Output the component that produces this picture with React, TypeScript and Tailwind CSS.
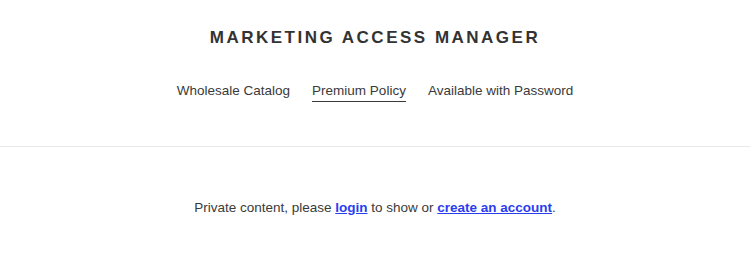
import React from "react";

const App = () => {
  return (
    <div className="min-h-screen bg-white font-['Liberation_Sans',Arial,sans-serif] text-[#3a3a3a]">
      <header className="flex flex-col items-center border-b border-[#e8e8e8] pt-[27px] pb-[44px]">
        <h1 className="text-[17px] font-bold tracking-[2.5px] uppercase leading-[22px] text-[#333]">
          Marketing Access Manager
        </h1>
        <nav className="mt-[32px] flex gap-[22px] text-[13.5px] leading-[20px]">
          <a className="text-[#3a3a3a]">Wholesale Catalog</a>
          <a className="text-[#3a3a3a] border-b border-[#3a3a3a]">Premium Policy</a>
          <a className="text-[#3a3a3a]">Available with Password</a>
        </nav>
      </header>
      <main className="pt-[51px] text-center text-[13.5px] leading-[20px] text-[#3a3a3a]">
        Private content, please{" "}
        <a className="font-bold text-[#2a3dee] underline">login</a> to show or{" "}
        <a className="font-bold text-[#2a3dee] underline">create an account</a>.
      </main>
    </div>
  );
};

export default App;
